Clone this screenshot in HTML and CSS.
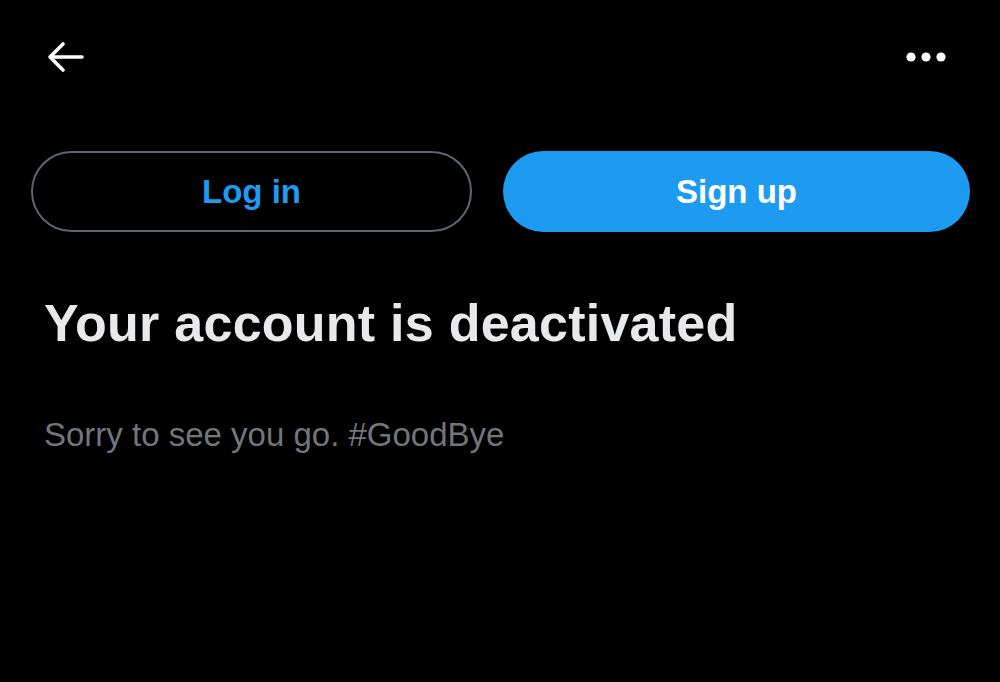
FILE: index.html
```html
<!DOCTYPE html>
<html lang="en">

<head>
    <meta charset="UTF-8">
    <meta name="viewport" content="width=device-width, initial-scale=1.0">
    <title>Account deactivated</title>
    <link rel="stylesheet" href="styles.css">
</head>

<body>
    <div class="topBar">
        <button class="iconBtn" aria-label="Back">
            <svg width="38" height="32" viewBox="0 0 38 32">
                <path d="M36 16H4M17 3L4 16l13 13" fill="none" stroke="#fff" stroke-width="3.6" stroke-linecap="round" stroke-linejoin="round"/>
            </svg>
        </button>
        <button class="iconBtn" aria-label="More">
            <svg width="44" height="12" viewBox="0 0 44 12">
                <circle cx="7" cy="6" r="4.6" fill="#fff"/>
                <circle cx="22" cy="6" r="4.6" fill="#fff"/>
                <circle cx="37" cy="6" r="4.6" fill="#fff"/>
            </svg>
        </button>
    </div>
    <div class="authRow">
        <button class="pill loginBtn">Log in</button>
        <button class="pill signupBtn">Sign up</button>
    </div>
    <div class="message">
        <h1>Your account is deactivated</h1>
        <p>Sorry to see you go. #GoodBye</p>
    </div>
</body>

</html>
```

FILE: styles.css
```css
* {
    margin: 0;
    padding: 0;
    box-sizing: border-box;
}

html,
body {
    background-color: #000;
    font-family: "Liberation Sans", Arial, sans-serif;
}

.topBar {
    display: flex;
    justify-content: space-between;
    align-items: center;
    height: 114px;
    padding: 0 52px 0 46px;
}

.iconBtn {
    display: flex;
    align-items: center;
    background: none;
    border: none;
    cursor: pointer;
}

.authRow {
    display: grid;
    grid-template-columns: 441fr 467fr;
    gap: 31px;
    padding: 37px 30px 0 31px;
}

.pill {
    height: 81px;
    border-radius: 41px;
    font-family: inherit;
    font-size: 33px;
    font-weight: bold;
    cursor: pointer;
}

.loginBtn {
    background: transparent;
    border: 2px solid #5b6670;
    color: #1d9bf0;
}

.signupBtn {
    background: #1d9bf0;
    border: none;
    color: #fff;
}

.message {
    padding: 0 44px;
}

.message h1 {
    margin-top: 61px;
    font-size: 52px;
    line-height: 60px;
    letter-spacing: 0.25px;
    color: #e7e9ea;
}

.message p {
    margin-top: 62px;
    font-size: 33px;
    line-height: 40px;
    color: #71767b;
}
```
